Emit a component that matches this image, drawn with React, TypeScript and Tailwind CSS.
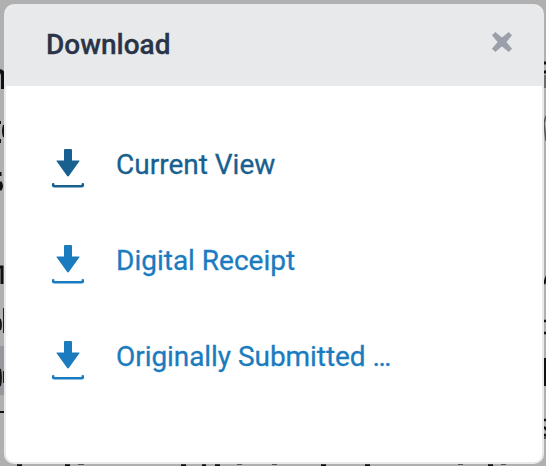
const items = [
  { label: 'Current View', color: 'text-[#17608f]' },
  { label: 'Digital Receipt', color: 'text-[#1b7bbf]' },
  { label: 'Originally Submitted …', color: 'text-[#1b7bbf] tracking-[-0.06px]' },
];

function DownloadIcon() {
  return (
    <svg width="34" height="40" viewBox="0 0 34 40" className="shrink-0" fill="currentColor">
      <path d="M14 1h6q1 0 1 1v10.500h7q1 0 .4.8L18 27.800q-1 1.400-2 0L5.600 13.300Q5 12.500 6 12.500h7V2q0-1 1-1z" />
      <path d="M2.200 36.200v1q0 1 1 1h27.600q1 0 1-1v-1" fill="none" stroke="currentColor" strokeWidth="2.6" strokeLinejoin="round" strokeLinecap="round" />
    </svg>
  );
}

function CloseIcon() {
  return (
    <svg width="20" height="20" viewBox="0 0 20 20" fill="#9b9fa9">
      <path d="M3.300.4 10 6.100 16.700.4 19.600 3.300 13.900 10 19.600 16.700 16.700 19.600 10 13.900 3.300 19.600.4 16.700 6.100 10 .4 3.300z" stroke="#9b9fa9" strokeWidth=".9" strokeLinejoin="round" />
    </svg>
  );
}

function PageBehind() {
  return (
    <svg className="absolute inset-0" width="546" height="466" viewBox="0 0 546 466">
      <path d="M0 346h4v49H0z" fill="#96979a" />
      <g fill="none" stroke="#111" strokeWidth="2.500" style={{ filter: 'blur(0.6px)' }}>
        <path d="M-1 71q4 0 4 5v13" strokeWidth="4" />
        <path d="M0 121v3M0 139v4M4 125q-2 6 0 12" strokeWidth="2" />
        <path d="M0 172v4M0 182q3 4 0 8" strokeWidth="3" />
        <path d="M-1 267h3v17" strokeWidth="3" />
        <path d="M0 319q2 6 0 11M4 308v25M0 369q2 8 0 17M4 371v12" strokeWidth="1.800" />
        <path d="M-1 412h5" strokeWidth="2" />
        <path d="M544 63h3M544 72h3" strokeWidth="3" />
        <path d="M545 75v13M546 116l-2 7 2 18" stroke="#555" strokeWidth="1.500" />
        <path d="M544 284l3-8M544 321h3M544 333h3M545 358v28M544 420h3M544 427l3 3M544 435h3" />
        <path d="M17 466h5M65 466h5M181 466h5M202 466h4M215 466h5M321 466h5M365 466h5M488 466h5" strokeWidth="3.500" />
        <path d="M78 464h6M237 464h5M272 464h5M458 464h5M501 464h5M545 436v3" stroke="#555" strokeWidth="2" />
      </g>
    </svg>
  );
}

export default function App() {
  return (
    <main className="relative h-[466px] w-[546px] overflow-hidden bg-[#b0b0b0] p-1 font-['Roboto',sans-serif]">
      <PageBehind />
      <section className="relative h-[460px] w-[540px] overflow-hidden rounded-[10px] border-2 border-[#e8e9eb] bg-white">
        <header className="flex h-20 items-center justify-between bg-[#e8e9eb] pr-[30px] pl-10">
          <h1 className="mb-0.5 text-[28px] leading-8 font-medium text-[#2a3448] [-webkit-text-stroke:0.3px_currentColor]">Download</h1>
          <button aria-label="Close" className="mb-2"><CloseIcon /></button>
        </header>
        <ul className="pt-[46px] pl-[45px]">
          {items.map((item) => (
            <li key={item.label} className={`flex h-24 items-start gap-[31px] ${item.color}`}>
              <div className="pt-4"><DownloadIcon /></div>
              <span className="pt-[17px] text-[28px] leading-8 whitespace-nowrap [-webkit-text-stroke:0.3px_currentColor]">{item.label}</span>
            </li>
          ))}
        </ul>
      </section>
    </main>
  );
}
